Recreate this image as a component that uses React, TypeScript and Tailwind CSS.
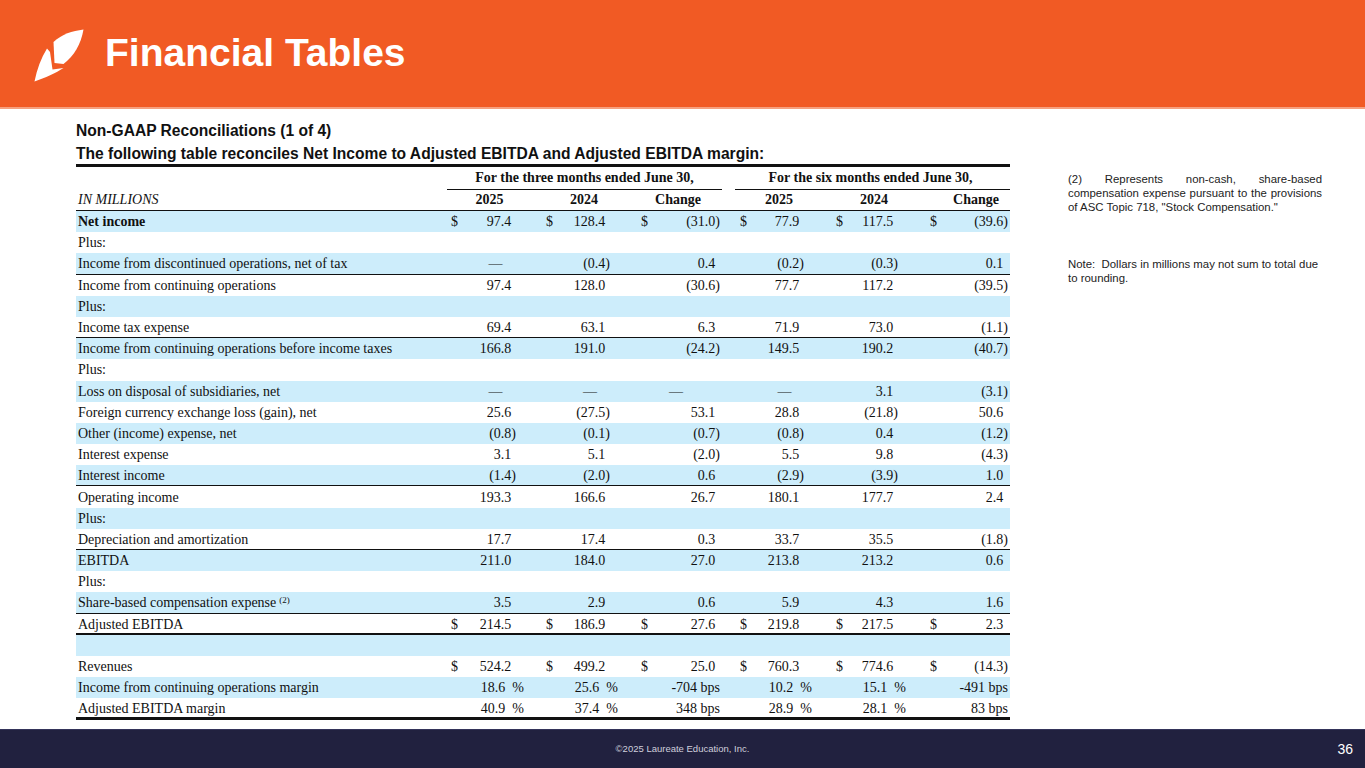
import React from "react";

type Border = "thin" | "thick" | "double";

interface Row {
  label: React.ReactNode;
  bold?: boolean;
  bg?: boolean;
  border?: Border;
  dollar?: boolean;
  vals?: string[];
}

const cols = "grid grid-cols-[371px_71px_94px_110px_13px_71px_94px_110px]";

// padding so headers and dashes sit over the figures
const hdrPad = ["pl-[14px]", "pl-[38px]", "pl-[22px]", "pl-[17px]", "pl-[42px]", "pl-[42px]"];
const dashPad = ["pl-[26px]", "pl-[50px]", "pl-[18px]", "pl-[28px]", "pl-[50px]", "pl-[36px]"];
const dollarPad = ["pl-[4px]", "pl-[28px]", "pl-[29px]", "pl-[5px]", "pl-[30px]", "pl-[30px]"];

const rows: Row[] = [
  { label: "Net income", bold: true, bg: true, dollar: true, vals: ["97.4", "128.4", "(31.0)", "77.9", "117.5", "(39.6)"] },
  { label: "Plus:" },
  { label: "Income from discontinued operations, net of tax", bg: true, border: "thin", vals: ["—", "(0.4)", "0.4", "(0.2)", "(0.3)", "0.1"] },
  { label: "Income from continuing operations", vals: ["97.4", "128.0", "(30.6)", "77.7", "117.2", "(39.5)"] },
  { label: "Plus:", bg: true },
  { label: "Income tax expense", border: "thin", vals: ["69.4", "63.1", "6.3", "71.9", "73.0", "(1.1)"] },
  { label: "Income from continuing operations before income taxes", bg: true, vals: ["166.8", "191.0", "(24.2)", "149.5", "190.2", "(40.7)"] },
  { label: "Plus:" },
  { label: "Loss on disposal of subsidiaries, net", bg: true, vals: ["—", "—", "—", "—", "3.1", "(3.1)"] },
  { label: "Foreign currency exchange loss (gain), net", vals: ["25.6", "(27.5)", "53.1", "28.8", "(21.8)", "50.6"] },
  { label: "Other (income) expense, net", bg: true, vals: ["(0.8)", "(0.1)", "(0.7)", "(0.8)", "0.4", "(1.2)"] },
  { label: "Interest expense", vals: ["3.1", "5.1", "(2.0)", "5.5", "9.8", "(4.3)"] },
  { label: "Interest income", bg: true, border: "thin", vals: ["(1.4)", "(2.0)", "0.6", "(2.9)", "(3.9)", "1.0"] },
  { label: "Operating income", vals: ["193.3", "166.6", "26.7", "180.1", "177.7", "2.4"] },
  { label: "Plus:", bg: true },
  { label: "Depreciation and amortization", border: "thin", vals: ["17.7", "17.4", "0.3", "33.7", "35.5", "(1.8)"] },
  { label: "EBITDA", bg: true, vals: ["211.0", "184.0", "27.0", "213.8", "213.2", "0.6"] },
  { label: "Plus:" },
  {
    label: (
      <>
        Share-based compensation expense<sup className="text-[9px] ml-[3px]">(2)</sup>
      </>
    ),
    bg: true,
    border: "thin",
    vals: ["3.5", "2.9", "0.6", "5.9", "4.3", "1.6"],
  },
  { label: "Adjusted EBITDA", border: "thick", dollar: true, vals: ["214.5", "186.9", "27.6", "219.8", "217.5", "2.3"] },
  { label: "", bg: true },
  { label: "Revenues", dollar: true, vals: ["524.2", "499.2", "25.0", "760.3", "774.6", "(14.3)"] },
  { label: "Income from continuing operations margin", bg: true, vals: ["18.6 %", "25.6 %", "-704 bps", "10.2 %", "15.1 %", "-491 bps"] },
  { label: "Adjusted EBITDA margin", border: "double", vals: ["40.9 %", "37.4 %", "348 bps", "28.9 %", "28.1 %", "83 bps"] },
];

function Value({ v, i, dollar }: { v: string; i: number; dollar?: boolean }) {
  if (v === "—") {
    return <div className={`text-center ${dashPad[i]}`}>—</div>;
  }
  const hang = v.endsWith(")") || v.endsWith("bps");
  let body: React.ReactNode;
  if (v.endsWith("%")) {
    body = (
      <span className="-mr-[8px]">
        {v.replace(" %", "")}
        <span className="ml-[7px]">%</span>
      </span>
    );
  } else {
    body = (
      <span>
        {v}
        {!hang && <span className="invisible">)</span>}
      </span>
    );
  }
  return (
    <div className={`flex justify-between pr-[2px] ${dollarPad[i]}`}>
      <span>{dollar ? "$" : ""}</span>
      {body}
    </div>
  );
}

function TableRow({ row }: { row: Row }) {
  const border =
    row.border === "thin"
      ? "border-b border-[#111]"
      : row.border === "thick"
      ? "border-b-2 border-[#111]"
      : row.border === "double"
      ? "border-b-[3px] border-[#111]"
      : "";
  const vals = row.vals ?? [];
  return (
    <div className={`${cols} h-[21.2px] items-center ${row.bg ? "bg-[#cdedfb]" : ""} ${border}`}>
      <div className={`pl-[2px] whitespace-nowrap ${row.bold ? "font-bold" : ""}`}>{row.label}</div>
      {[0, 1, 2].map((i) => (
        <div key={i}>{vals[i] !== undefined && <Value v={vals[i]} i={i} dollar={row.dollar} />}</div>
      ))}
      <div />
      {[3, 4, 5].map((i) => (
        <div key={i}>{vals[i] !== undefined && <Value v={vals[i]} i={i} dollar={row.dollar} />}</div>
      ))}
    </div>
  );
}

function Logo() {
  return (
    <svg width="60" height="60" viewBox="0 0 60 60" className="shrink-0">
      <path d="M23.5 18 C32 10 42 7 53.5 5.5 C51 20 44 32 33.5 40 L24.5 39 Z" fill="white" />
      <path d="M17 24.5 C11 34 7 45 4.5 57.5 C15 54 26 49 33.5 44 L22.5 45.5 L20 28 Z" fill="white" />
    </svg>
  );
}

export default function App() {
  return (
    <div className="w-[1365px] h-[768px] flex flex-col bg-white font-['Liberation_Sans',Arial,sans-serif] overflow-hidden">
      {/* Title bar */}
      <div className="h-[109px] bg-[#f15a24] flex items-center pl-[30px] border-b-[2px] border-[#f6a07f]">
        <Logo />
        <h1 className="ml-[15px] text-[39px] font-bold text-white leading-none -mt-[2px]">Financial Tables</h1>
      </div>

      <div className="flex-1 flex">
        <div className="pl-[76px] pt-[12px] w-[1010px] shrink-0">
          <p className="text-[15.6px] font-bold leading-[20px] text-[#111] whitespace-nowrap">Non-GAAP Reconciliations (1 of 4)</p>
          <p className="mt-[3px] text-[15.6px] font-bold leading-[20px] text-[#111] whitespace-nowrap">
            The following table reconciles Net Income to Adjusted EBITDA and Adjusted EBITDA margin:
          </p>

          <div className="w-[934px] border-t-[3px] border-[#111] font-['Liberation_Serif','Times_New_Roman',serif] text-[14px] text-[#111]">
            <div className={`${cols} h-[21px] items-end font-bold`}>
              <div />
              <div className="col-span-3 text-center border-b border-[#111] pb-[1px] whitespace-nowrap">
                For the three months ended June 30,
              </div>
              <div />
              <div className="col-span-3 text-center border-b border-[#111] pb-[1px] pr-[4px] whitespace-nowrap">
                For the six months ended June 30,
              </div>
            </div>
            <div className={`${cols} h-[23px] items-center border-b border-[#111]`}>
              <div className="pl-[2px] italic">IN MILLIONS</div>
              {[0, 1, 2].map((i) => (
                <div key={i} className={`text-center font-bold ${hdrPad[i]}`}>
                  {i === 0 ? "2025" : i === 1 ? "2024" : "Change"}
                </div>
              ))}
              <div />
              {[3, 4, 5].map((i) => (
                <div key={i} className={`text-center font-bold ${hdrPad[i]}`}>
                  {i === 3 ? "2025" : i === 4 ? "2024" : "Change"}
                </div>
              ))}
            </div>
            {rows.map((r, k) => (
              <TableRow key={k} row={r} />
            ))}
          </div>
        </div>

        <div className="ml-[58px] w-[254px] pt-[64px] text-[11.4px] leading-[13.8px] text-[#222]">
          <p className="text-justify">
            (2) Represents non-cash, share-based compensation expense pursuant to the provisions of ASC Topic 718,
            "Stock Compensation."
          </p>
          <p className="mt-[44px]">Note:&nbsp; Dollars in millions may not sum to total due to rounding.</p>
        </div>
      </div>

      {/* Footer */}
      <div className="h-[39px] bg-[#21213f] border-t border-[#34345a] relative flex items-center justify-center">
        <span className="text-[9.5px] text-[#cfcfdc]">©2025 Laureate Education, Inc.</span>
        <span className="absolute right-[12px] text-[14px] text-white">36</span>
      </div>
    </div>
  );
}
